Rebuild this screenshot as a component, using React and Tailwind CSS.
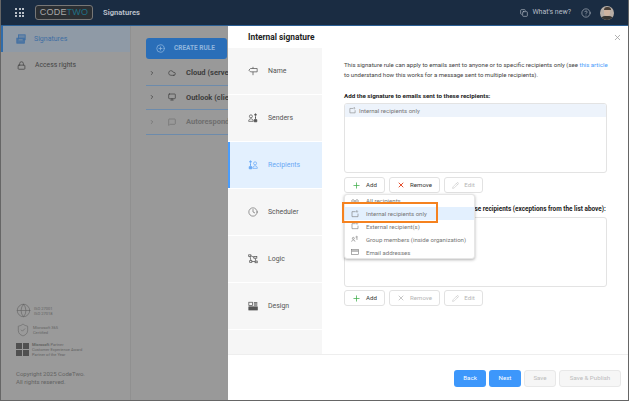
import React from "react";
import { ChevronRight, Cloud, Monitor, MessageSquare, Plus, X, Pencil, CircleHelp, Clock, Lock, CirclePlus, Globe, ShieldCheck, Copy } from "lucide-react";

const Svg = ({ s = 10, children, className = "" }) => (
  <svg width={s} height={s} viewBox="0 0 12 12" fill="none" stroke="currentColor" strokeWidth="0.9" className={`shrink-0 ${className}`}>
    {children}
  </svg>
);

const SignIcon = () => (
  <Svg>
    <path d="M3 3h8v4H3L1 5z" />
    <path d="M6 1v2M6 7v4" />
  </Svg>
);
const SendersIcon = () => (
  <Svg>
    <circle cx="3.5" cy="4" r="1.8" />
    <path d="M.8 10c0-2 1.2-3 2.7-3s2.7 1 2.7 3z" />
    <circle cx="9" cy="2" r="1" fill="currentColor" />
    <path d="M9 4v3M7.5 8h3v2.5h-3z" fill="currentColor" strokeWidth="1.2" />
  </Svg>
);
const RecipientsIcon = () => (
  <Svg>
    <circle cx="8.5" cy="4" r="1.8" />
    <path d="M5.8 10c0-2 1.2-3 2.7-3s2.7 1 2.7 3z" />
    <circle cx="3" cy="2" r="1" fill="currentColor" />
    <path d="M3 4v3M1.5 8h3v2.5h-3z" fill="currentColor" strokeWidth="1.2" />
  </Svg>
);
const LogicIcon = () => (
  <Svg>
    <rect x="0.8" y="1" width="2.6" height="2" />
    <rect x="7" y="3" width="3.6" height="2" />
    <rect x="2" y="8" width="2.6" height="2" />
    <rect x="8.5" y="8.5" width="2.6" height="2" />
    <path d="M3.4 2 7 4M2.5 3l1 5M4.6 9h3.9M8.5 5l1 3.5" />
  </Svg>
);
const DesignIcon = () => (
  <Svg>
    <rect x="1" y="1.5" width="4.5" height="4" />
    <path d="M7 2h4.2M7 3.5h4.2M7 5h4.2" strokeWidth="1.1" />
    <rect x="1" y="7" width="10.2" height="3.8" fill="currentColor" />
  </Svg>
);
const InboxIcon = ({ s = 8 }) => (
  <Svg s={s}>
    <path d="M7 2.5H1.5v7.5h9V5.5" />
    <path d="M9 1v3M7.8 2.2 9 1l1.2 1.2" />
  </Svg>
);
const GroupIcon = () => (
  <Svg s={8}>
    <circle cx="3.5" cy="5" r="1.5" />
    <path d="M1 10c0-1.6 1-2.5 2.5-2.5S6 8.4 6 10" />
    <circle cx="8.5" cy="3" r="1.1" />
    <path d="M7.4 6h3" />
  </Svg>
);
const AllIcon = () => (
  <Svg s={8}>
    <circle cx="3" cy="6" r="2" />
    <circle cx="9" cy="6" r="2" />
    <path d="M5 6h2" />
  </Svg>
);
const EmailIcon = () => (
  <Svg s={8}>
    <rect x="1" y="2.5" width="10" height="7" />
    <path d="M1 4.5h10" strokeWidth="1.4" />
  </Svg>
);
const SigIcon = () => (
  <svg width="10" height="10" viewBox="0 0 12 12" className="mr-[8px] shrink-0" fill="none" stroke="currentColor" strokeWidth="1">
    <rect x="3" y="1" width="8" height="6" fill="currentColor" fillOpacity="0.45" />
    <rect x="1" y="5" width="9" height="6" fill="currentColor" fillOpacity="0.8" />
    <path d="M3 7h5" stroke="#8f9aa6" />
  </svg>
);

function Btn({ icon, label, disabled, w }) {
  return (
    <div className={`flex h-[16px] items-center justify-center gap-[5px] rounded-[3px] border border-[#e2e2e2] bg-white text-[6.1px] ${w} ${disabled ? "text-[#b5b5b5]" : "text-[#333]"}`}>
      {icon}
      <span>{label}</span>
    </div>
  );
}

function NavItem({ icon, label, active }) {
  return (
    <div className={`flex h-[46px] items-center gap-[10px] text-[6.9px] ${active ? "border-l-[2px] border-[#4b9dfb] bg-[#e3f0fe] pl-[18px] text-[#6aa9f5]" : "bg-[#f6f6f6] pl-[20px] text-[#555]"}`}>
      {icon}
      <span>{label}</span>
    </div>
  );
}

function TreeRow({ icon, label, faded }) {
  return (
    <div className={`flex h-[24.5px] w-[300px] items-center border-b border-[#6d8bab] pl-[3px] text-[7.5px] font-bold ${faded ? "text-[#6f6f6f]" : "text-[#3d3d3d]"}`}>
      <ChevronRight size={6} strokeWidth={3} className="mr-[13px] shrink-0" />
      <span className="mr-[10px] shrink-0">{icon}</span>
      <span className="whitespace-nowrap">{label}</span>
    </div>
  );
}

function MenuRow({ icon, label, active }) {
  return (
    <div className={`flex h-[12.8px] items-center gap-[7px] pl-[6px] text-[6.05px] text-[#777] ${active ? "bg-[#e3f0fe]" : ""}`}>
      {icon}
      <span className="whitespace-nowrap">{label}</span>
    </div>
  );
}

export default function App() {
  return (
    <div className="relative flex h-[401px] w-[629px] flex-col overflow-hidden border-b border-l border-r border-[#666] bg-white font-['Roboto',sans-serif]">
      <header className="flex h-[26px] shrink-0 items-center border-b border-[#2b5f94] bg-[#1a2c42] text-[#b7bec7]">
        <div className="ml-[14px] grid h-[9px] w-[9px] grid-cols-3 gap-[1.5px]">
          {Array.from({ length: 9 }).map((_, i) => (
            <span key={i} className="block h-[2px] w-[2px] bg-[#b9c0c8]" />
          ))}
        </div>
        <div className="ml-[11px] flex h-[15px] w-[58px] items-center justify-center rounded-[3px] border border-[#777] bg-[#2b2f33] font-['Liberation_Sans',sans-serif] text-[9px] tracking-[0.2px]">
          <span className="text-[#a9a9a9]">CODE</span>
          <span className="text-[#1f6f86]">TWO</span>
        </div>
        <span className="ml-[10px] text-[7.6px] font-bold">Signatures</span>
        <div className="ml-auto flex items-center">
          <Copy size={8} className="mr-[4px]" />
          <span className="text-[7px]">What's new?</span>
          <CircleHelp size={10} strokeWidth={1.5} className="ml-[10px]" />
          <div className="relative ml-[9px] mr-[14px] flex h-[14px] w-[14px] items-end justify-center overflow-hidden rounded-full bg-[#b8aea6]">
            <div className="absolute top-[2px] h-[8px] w-[6px] rounded-full bg-[#d0b4a0]" />
            <div className="absolute top-[1px] h-[3px] w-[7px] rounded-t-full bg-[#4a4038]" />
            <div className="h-[4px] w-[12px] rounded-t-full bg-[#3a3632]" />
          </div>
        </div>
      </header>

      <div className="flex flex-1 bg-[#999]">
        <aside className="flex w-[130px] shrink-0 flex-col justify-between border-r border-[#909090] bg-[#9a9a9a] pb-[14px]">
          <div>
            <div className="flex h-[26px] items-center border-l-[2px] border-[#2f6cab] bg-[#8f9aa6] pl-[13px] text-[7px] text-[#3e6ea3]">
              <SigIcon />
              Signatures
            </div>
            <div className="flex h-[26px] items-center pl-[16px] text-[6.8px] text-[#444]">
              <Lock size={9} className="mr-[9px]" />
              Access rights
            </div>
          </div>
          <div className="pl-[15px] text-[#636363]">
            <div className="flex items-center gap-[3px] text-[4px] leading-[5px]">
              <Globe size={15} strokeWidth={1} />
              <span>ISO 27001<br />ISO 27018</span>
            </div>
            <div className="mt-[5px] flex items-center gap-[3px] text-[4px] leading-[5px]">
              <ShieldCheck size={14} strokeWidth={1} />
              <span>Microsoft 365<br />Certified</span>
            </div>
            <div className="mt-[5px] flex items-center gap-[3px] text-[4px] leading-[5px]">
              <div className="grid h-[13px] w-[13px] shrink-0 grid-cols-2 gap-[1px]">
                <span className="bg-[#505050]" /><span className="bg-[#505050]" /><span className="bg-[#505050]" /><span className="bg-[#505050]" />
              </div>
              <span><b>Microsoft</b> Partner<br />Customer Experience Award<br />Partner of the Year</span>
            </div>
            <div className="mt-[13px] text-[6px] leading-[8px]">Copyright 2025 CodeTwo.<br />All rights reserved.</div>
          </div>
        </aside>
        <main className="flex-1 pl-[15px] pt-[12px]">
          <div className="flex h-[21px] w-[81px] items-center rounded-[3px] bg-[#2a6eb8] pl-[10px] text-[6.5px] font-bold text-[#8fb5dd]">
            <CirclePlus size={9} className="mr-[9px]" />
            CREATE RULE
          </div>
          <div className="mt-[2px] w-[90px]">
            <TreeRow icon={<Cloud size={8} />} label="Cloud (server)" />
            <TreeRow icon={<Monitor size={8} />} label="Outlook (client)" />
            <TreeRow icon={<MessageSquare size={8} />} label="Autoresponders" faded />
          </div>
        </main>
      </div>

      <section className="absolute bottom-0 right-0 top-[26px] flex w-[400px] flex-col bg-white">
        <div className="flex h-[22px] shrink-0 items-center justify-between pl-[20px] pr-[6px]">
          <span className="text-[8.4px] font-bold text-[#222]">Internal signature</span>
          <X size={9} className="text-[#999]" />
        </div>
        <div className="flex min-h-0 flex-1">
          <nav className="flex h-[307px] w-[94px] shrink-0 flex-col gap-[1px]">
            <NavItem label="Name" icon={<SignIcon />} />
            <NavItem label="Senders" icon={<SendersIcon />} />
            <NavItem label="Recipients" icon={<RecipientsIcon />} active />
            <NavItem label="Scheduler" icon={<Clock size={10} strokeWidth={1.4} />} />
            <NavItem label="Logic" icon={<LogicIcon />} />
            <NavItem label="Design" icon={<DesignIcon />} />
            <div className="flex-1 bg-[#f6f6f6]" />
          </nav>
          <div className="relative flex-1 pl-[22px] pr-[20px] pt-[12px]">
            <p className="text-[6.05px] leading-[10px] text-[#444]">
              This signature rule can apply to emails sent to anyone or to specific recipients only (see <span className="whitespace-nowrap text-[#4b9dfb]">this article</span> to understand how this works for a message sent to multiple recipients).
            </p>
            <div className="mt-[11.5px] text-[6.25px] font-bold leading-[8px] text-[#222]">Add the signature to emails sent to these recipients:</div>
            <div className="mr-[1px] mt-[3.5px] h-[70px] overflow-hidden rounded-[3px] border border-[#e3e3e3]">
              <div className="flex h-[13px] items-center gap-[3px] bg-[#edf3fb] pl-[4px] text-[6.05px] text-[#777]">
                <InboxIcon s={7} />
                Internal recipients only
              </div>
            </div>
            <div className="mt-[4px] flex gap-[4px]">
              <Btn w="w-[41px]" label="Add" icon={<Plus size={9} className="text-[#3fae49]" />} />
              <Btn w="w-[51px]" label="Remove" icon={<X size={8} strokeWidth={3} className="text-[#e5502f]" />} />
              <Btn w="w-[39px]" label="Edit" disabled icon={<Pencil size={7} className="text-[#c5c5c5]" />} />
            </div>
            <div className="mt-[12px] whitespace-nowrap text-[6.4px] font-bold leading-[8px] text-[#222]">
              Do not add the signature to emails sent to these recipients (exceptions from the list above):
            </div>
            <div className="mr-[1px] mt-[4px] h-[69.5px] rounded-[3px] border border-[#e3e3e3]" />
            <div className="mt-[3.5px] flex gap-[4px]">
              <Btn w="w-[41px]" label="Add" icon={<Plus size={9} className="text-[#3fae49]" />} />
              <Btn w="w-[51px]" label="Remove" disabled icon={<X size={8} className="text-[#aaa]" />} />
              <Btn w="w-[39px]" label="Edit" disabled icon={<Pencil size={7} className="text-[#c5c5c5]" />} />
            </div>

            <div className="absolute left-[22px] top-[145.5px] h-[65px] w-[131px] rounded-[3px] border border-[#e6e6e6] bg-white shadow-[0_1px_3px_rgba(0,0,0,0.3)]">
              <MenuRow label="All recipients" icon={<AllIcon />} />
              <MenuRow label="Internal recipients only" active icon={<InboxIcon />} />
              <MenuRow label="External recipient(s)" icon={<InboxIcon />} />
              <MenuRow label="Group members (inside organization)" icon={<GroupIcon />} />
              <MenuRow label="Email addresses" icon={<EmailIcon />} />
            </div>
            <div className="absolute left-[19.5px] top-[154px] h-[21px] w-[96px] border-[2.5px] border-[#f5821f]" />
          </div>
        </div>
        <footer className="flex h-[46px] shrink-0 items-start justify-end gap-[3px] border-t border-[#eee] pr-[7px] pt-[15px] text-[6.2px]">
          <div className="flex h-[17px] w-[32px] items-center justify-center rounded-[3px] bg-[#3d97fb] text-white">Back</div>
          <div className="flex h-[17px] w-[32px] items-center justify-center rounded-[3px] bg-[#3d97fb] text-white">Next</div>
          <div className="flex h-[17px] w-[32px] items-center justify-center rounded-[3px] border border-[#e8e8e8] bg-[#f6f6f6] text-[#bbb]">Save</div>
          <div className="flex h-[17px] w-[62px] items-center justify-center rounded-[3px] border border-[#e8e8e8] bg-[#f6f6f6] text-[#bbb]">Save &amp; Publish</div>
        </footer>
      </section>
    </div>
  );
}
